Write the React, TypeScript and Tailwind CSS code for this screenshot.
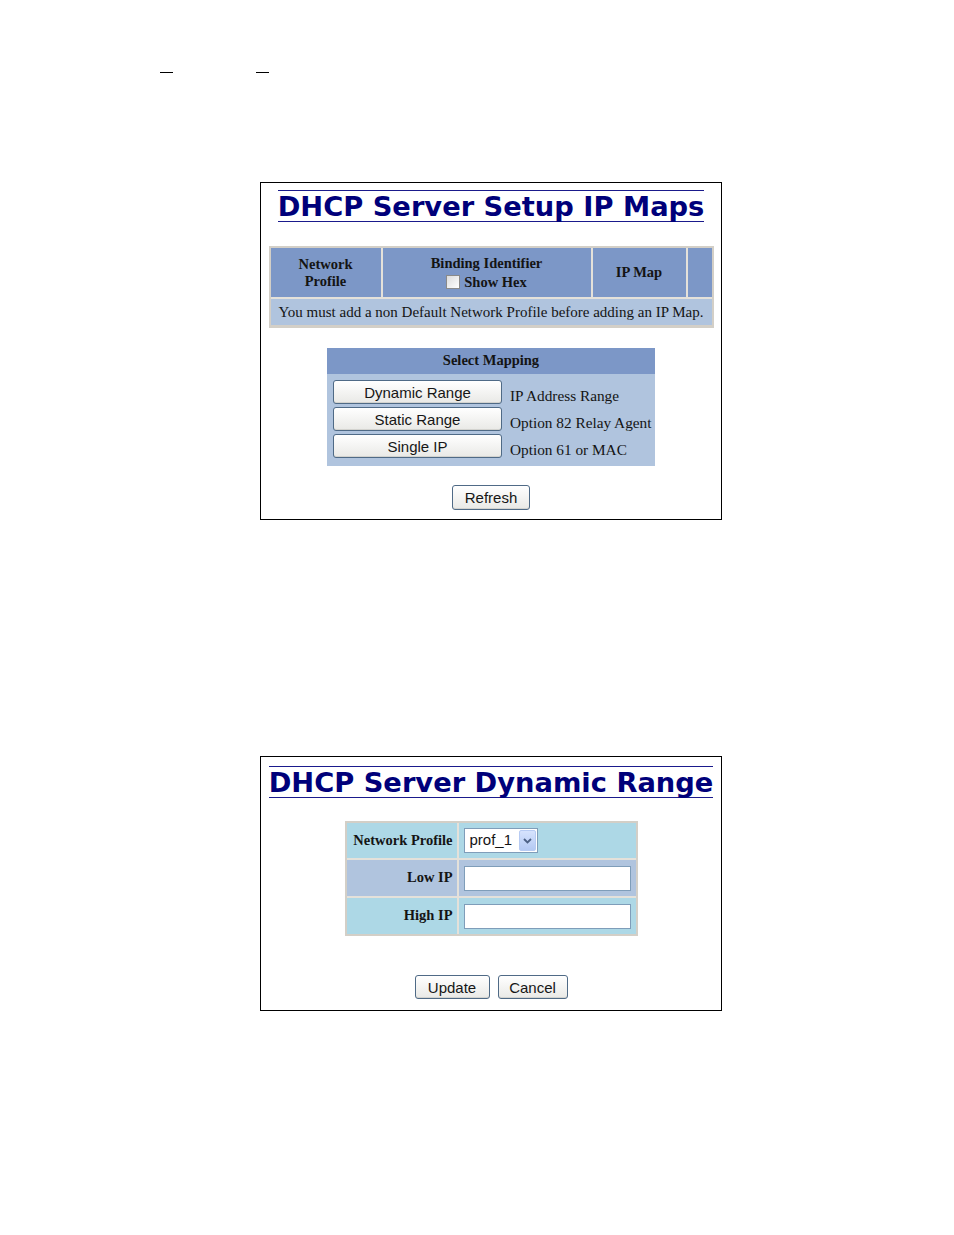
// ── DHCP Server pages (two panels) ───────────────────────────────────────────

const serif = "font-['Liberation_Serif','Times_New_Roman',serif]";
const sans = "font-['Liberation_Sans',Arial,sans-serif]";

function Title({ text, top }: { text: string; top: string }) {
    return (
        <div className={`${top} flex justify-center`}>
            <span className="inline-block border-t border-b border-[#1a1a8c] pt-[2px] leading-[28px] text-[27.3px] font-bold text-[#00007a] font-['DejaVu_Sans',Verdana,sans-serif] whitespace-nowrap">
                {text}
            </span>
        </div>
    );
}

function Btn({ label, w, h = 'h-[24px]' }: { label: string; w: string; h?: string }) {
    return (
        <button
            className={`${w} ${h} ${sans} text-[15px] leading-none text-[#161616] rounded-[3px] border border-[#4f6a86] bg-gradient-to-b from-white to-[#e9e9e6] shadow-[inset_0_-1px_0_#d3d3cf] flex items-center justify-center`}
        >
            {label}
        </button>
    );
}

function IpMaps() {
    const mapping = [
        ['Dynamic Range', 'IP Address Range'],
        ['Static Range', 'Option 82 Relay Agent'],
        ['Single IP', 'Option 61 or MAC'],
    ];

    return (
        <div className="ml-[260px] mt-[109px] w-[462px] border border-black flex flex-col items-center pb-[9px]">
            <Title text="DHCP Server Setup IP Maps" top="mt-[7px]" />

            {/* Maps table */}
            <div className={`mt-[24px] w-[445px] border-2 border-b-[3px] border-[#d3cfc7] bg-[#e4e1da] grid grid-cols-[110px_208px_93px_24px] gap-[2px] ${serif} text-[#141414]`}>
                <div className="h-[49px] bg-[#7c97c7] flex flex-col items-center justify-center text-[14.5px] font-bold leading-[17px]">
                    <span>Network</span>
                    <span>Profile</span>
                </div>
                <div className="h-[49px] bg-[#7c97c7] flex flex-col items-center justify-center text-[14.5px] font-bold leading-[17px]">
                    <span>Binding Identifier</span>
                    <span className="flex items-center gap-[4px] mt-[2px]">
                        <span className="w-[14px] h-[14px] border border-[#8a8a8a] bg-gradient-to-br from-[#dcdcdc] to-white" />
                        Show Hex
                    </span>
                </div>
                <div className="h-[49px] bg-[#7c97c7] flex items-center justify-center text-[14.5px] font-bold">
                    IP Map
                </div>
                <div className="h-[49px] bg-[#7c97c7]" />
                <div className="col-span-4 h-[26px] bg-[#b0c4de] flex items-center justify-center text-[15px]">
                    You must add a non Default Network Profile before adding an IP Map.
                </div>
            </div>

            {/* Select mapping */}
            <div className={`mt-[20px] w-[328px] bg-[#b0c4de] ${serif} text-[#141414]`}>
                <div className="h-[26px] bg-[#7c97c7] flex items-center justify-center text-[14.5px] font-bold">
                    Select Mapping
                </div>
                <div className="pt-[6px] pb-[7px] pl-[6px] flex flex-col gap-[2px]">
                    {mapping.map(([btn, desc]) => (
                        <div key={btn} className="flex items-start">
                            <Btn label={btn} w="w-[169px]" />
                            <span className="ml-[8px] mt-[7px] text-[15.3px] leading-[18px] whitespace-nowrap">{desc}</span>
                        </div>
                    ))}
                </div>
            </div>

            <div className="mt-[19px]">
                <Btn label="Refresh" w="w-[78px]" h="h-[25px]" />
            </div>
        </div>
    );
}

function DynamicRange() {
    return (
        <div className="ml-[260px] mt-[236px] w-[462px] border border-black flex flex-col items-center pb-[11px]">
            <Title text="DHCP Server Dynamic Range" top="mt-[9px]" />

            <div className={`mt-[23px] w-[293px] border-2 border-[#d3cfc7] bg-[#e4e1da] grid grid-cols-[110px_177px] gap-[2px] ${serif} text-[#141414] text-[14.5px] font-bold`}>
                {/* Network Profile */}
                <div className="h-[35px] bg-[#add8e6] flex items-center justify-end pr-[4px] whitespace-nowrap">Network Profile</div>
                <div className="h-[35px] bg-[#add8e6] flex items-center pl-[5px]">
                    <div className={`w-[74px] h-[25px] bg-white border border-[#7f9db9] flex items-center justify-between pl-[5px] pr-[1px] ${sans} font-normal text-[15px]`}>
                        <span>prof_1</span>
                        <span className="w-[17px] h-[21px] rounded-[2px] border border-[#b7cbf3] bg-gradient-to-b from-[#d6e3fd] to-[#b4c9f3] flex items-center justify-center">
                            <svg width="9" height="6" viewBox="0 0 9 6">
                                <path d="M1 1 L4.5 4.5 L8 1" fill="none" stroke="#4d6185" strokeWidth="1.8" />
                            </svg>
                        </span>
                    </div>
                </div>

                {/* Low IP */}
                <div className="h-[36px] bg-[#b0c4de] flex items-center justify-end pr-[4px]">Low IP</div>
                <div className="h-[36px] bg-[#b0c4de] flex items-center pl-[5px]">
                    <div className="w-[167px] h-[25px] bg-white border border-[#7f9db9]" />
                </div>

                {/* High IP */}
                <div className="h-[36px] bg-[#add8e6] flex items-center justify-end pr-[4px]">High IP</div>
                <div className="h-[36px] bg-[#add8e6] flex items-center pl-[5px]">
                    <div className="w-[167px] h-[25px] bg-white border border-[#7f9db9]" />
                </div>
            </div>

            <div className="mt-[39px] flex gap-[8px]">
                <Btn label="Update" w="w-[75px]" />
                <Btn label="Cancel" w="w-[70px]" />
            </div>
        </div>
    );
}

export default function App() {
    return (
        <div className="w-[954px] h-[1235px] bg-white overflow-hidden">
            {/* stray dashes at the top of the page */}
            <div className="pt-[72px] pl-[160px] flex gap-[83px]">
                <div className="w-[13px] h-[1px] bg-black" />
                <div className="w-[13px] h-[1px] bg-black" />
            </div>
            <IpMaps />
            <DynamicRange />
        </div>
    );
}
